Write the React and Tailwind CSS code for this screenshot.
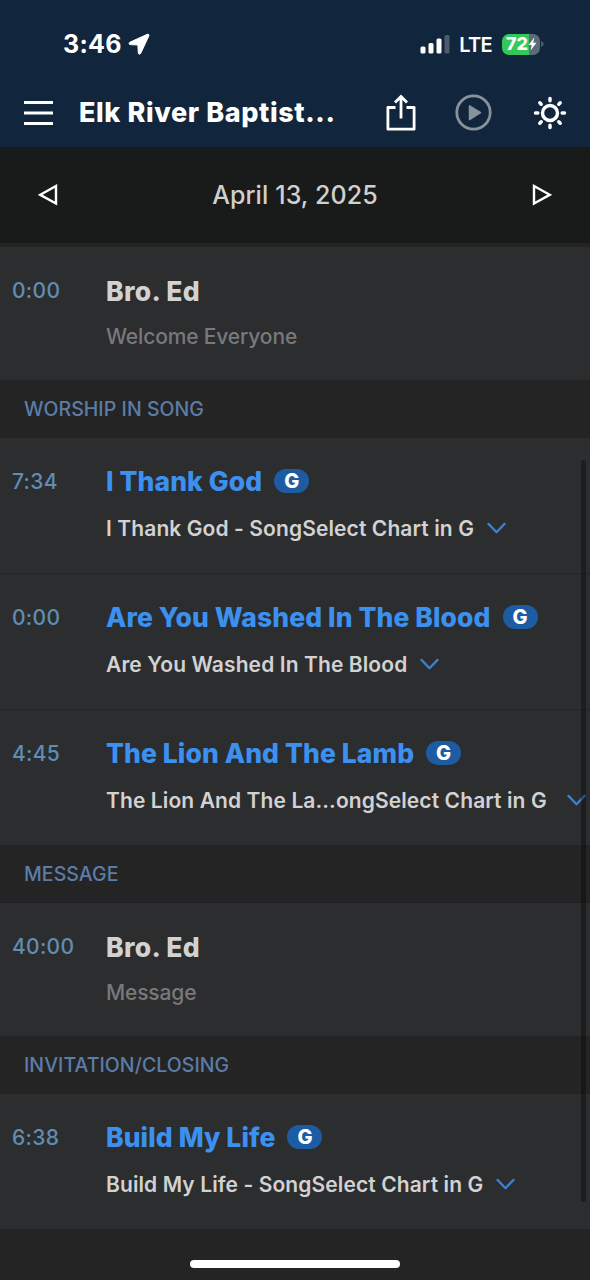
import { Fragment } from 'react';

const plan = [
    {
        section: null,
        items: [{ time: '0:00', title: 'Bro. Ed', note: 'Welcome Everyone' }],
    },
    {
        section: 'WORSHIP IN SONG',
        items: [
            { time: '7:34', title: 'I Thank God', songKey: 'G', chart: 'I Thank God - SongSelect Chart in G' },
            { time: '0:00', title: 'Are You Washed In The Blood', songKey: 'G', chart: 'Are You Washed In The Blood' },
            { time: '4:45', title: 'The Lion And The Lamb', songKey: 'G', chart: 'The Lion And The La...ongSelect Chart in G', wide: true },
        ],
    },
    {
        section: 'MESSAGE',
        items: [{ time: '40:00', title: 'Bro. Ed', note: 'Message' }],
    },
    {
        section: 'INVITATION/CLOSING',
        items: [{ time: '6:38', title: 'Build My Life', songKey: 'G', chart: 'Build My Life - SongSelect Chart in G' }],
    },
];

function StatusBar() {
    return (
        <div className="flex h-[88px] items-center pl-[63px] pr-[46px] text-white">
            <span className="pt-px text-[25px] font-bold leading-none tracking-[0.300px]">3:46</span>
            <svg className="ml-[6px] h-[22px] w-[22px]" viewBox="0 0 22 22" fill="#fff" stroke="#fff" strokeWidth="1" strokeLinejoin="round">
                <path d="M19.400 1.300 1.900 9.200c-1.200.6-1.100 2.200.3 2.400l7.700.4.4 7.900c.1 1.500 1.900 1.700 2.500.3L20.900 2.800c.4-1.100-.4-1.900-1.500-1.500z" />
            </svg>
            <div className="ml-auto flex items-center">
                <svg className="h-[20px] w-[30px]" viewBox="0 0 30 20" fill="#fff">
                    <rect x="0.500" y="12.500" width="5" height="7" rx="1.500" />
                    <rect x="8.500" y="9" width="5" height="10.500" rx="1.500" />
                    <rect x="16.500" y="4.500" width="5" height="15" rx="1.500" />
                    <rect x="24.500" y="1" width="5" height="18.500" rx="1.500" opacity="0.250" />
                </svg>
                <span className="ml-[9px] pt-px text-[20px] font-semibold leading-none tracking-[-0.700px]">LTE</span>
                <div className="ml-2.5 flex h-[21px] w-[38px] items-center overflow-hidden rounded-[7px] bg-linear-to-r from-[#34c759] from-72% to-[#5c6b7a] to-72% pl-1">
                    <span className="text-[18px] font-extrabold leading-none">72</span>
                    <svg className="h-[14px] w-[9px]" viewBox="0 0 9 14" fill="#fff">
                        <path d="M6.300.500.600 7.900h3.100L2.500 13.500l6-7.700H5.200z" />
                    </svg>
                </div>
                <svg className="ml-px h-[6px] w-[3px]" viewBox="0 0 3 6" fill="#4b5b6c">
                    <path d="M0 0c3.500 1 3.500 5 0 6z" />
                </svg>
            </div>
        </div>
    );
}

function NavBar() {
    return (
        <div className="flex h-[59px] items-start pl-6 pr-[23px]">
            <svg className="mt-[12px] h-[26px] w-[29px]" viewBox="0 0 29 26" stroke="#fff" strokeWidth="2.800">
                <path d="M0 2.500h29M0 13h29M0 23.500h29" />
            </svg>
            <h1 className="ml-[26px] mt-[9px] whitespace-nowrap text-[27px] font-extrabold leading-8 tracking-[0.600px] text-white">Elk River Baptist...</h1>
            <div className="ml-auto flex items-start">
                <svg className="mt-[6px] h-[38px] w-[30px]" viewBox="0 0 30 38" fill="none" stroke="#fff" strokeWidth="2.800">
                    <path d="M9.500 13.500H1.900v21.700h26.200V13.500h-7.600" strokeLinejoin="round" />
                    <path d="M15 24.500V3M9 8.500l6-6 6 6" />
                </svg>
                <svg className="ml-[39px] mt-[6px] h-[37px] w-[37px]" viewBox="0 0 37 37">
                    <circle cx="18.500" cy="18.500" r="16.700" fill="none" stroke="#88929d" strokeWidth="2.800" />
                    <path d="M14.500 11.800v13.800l11-6.900z" fill="#88929d" stroke="#88929d" strokeWidth="1.500" strokeLinejoin="round" />
                </svg>
                <svg className="ml-[41px] mt-[8px] h-[34px] w-[34px]" viewBox="0 0 34 34" fill="none" stroke="#fff" strokeLinecap="round">
                    <circle cx="17" cy="17" r="7.500" strokeWidth="3.400" />
                    <path strokeWidth="3.500" d="M17 2.500v2.300M17 29.200v2.300M2.500 17h2.300M29.200 17h2.300M6.800 6.800l1.400 1.400M25.800 25.800l1.400 1.400M6.800 27.200l1.400-1.400M25.800 8.200l1.400-1.400" />
                </svg>
            </div>
        </div>
    );
}

function DateBar() {
    return (
        <div className="flex h-24 items-center justify-between bg-[#191b1a] px-[38px]">
            <svg className="h-[22px] w-5" viewBox="0 0 20 22" fill="none" stroke="#fff" strokeWidth="2.400">
                <path d="M18 2v17.500L2.300 10.800z" />
            </svg>
            <span className="pt-px text-[25px] font-medium leading-none tracking-[0.100px] text-[#d0d0d0]">April 13, 2025</span>
            <svg className="h-[22px] w-5" viewBox="0 0 20 22" fill="none" stroke="#fff" strokeWidth="2.400">
                <path d="M2 2v17.500l15.700-8.700z" />
            </svg>
        </div>
    );
}

function PlanItem({ item }) {
    return (
        <div className={`flex border-b border-[#252526] bg-[#2c2d2f] pl-3 pt-[27px] last:border-b-0 ${item.note ? 'h-[133px]' : 'h-[136px] last:h-[135px]'}`}>
            <div className="w-[93px] shrink-0 pt-px text-[21px] font-medium leading-8 tracking-[0.300px] text-[#5f8db3]">{item.time}</div>
            <div className="min-w-0 whitespace-nowrap pl-px">
                <div className="flex h-8 items-center">
                    <span className={`text-[26.500px] font-extrabold leading-8 ${item.songKey ? 'tracking-[0.080px] text-[#3c91f0]' : 'pt-px tracking-[0.350px] text-[#d2d2d2]'}`}>{item.title}</span>
                    {item.songKey && (
                        <span className="ml-3 flex h-6 w-[35px] items-center justify-center rounded-full bg-[#1d5ba3] text-[20px] font-extrabold leading-none text-white">
                            {item.songKey}
                        </span>
                    )}
                </div>
                {item.note && <div className="mt-[17px] text-[21px] font-medium leading-7 tracking-[-0.150px] text-[#79797b]">{item.note}</div>}
                {item.chart && (
                    <div className="mt-[17px] flex h-7 items-center text-[21px] font-semibold tracking-[0.100px] text-[#d2d2d2]">
                        <span className="pt-px">{item.chart}</span>
                        <svg className={`h-3 w-[19px] shrink-0 ${item.wide ? 'ml-5' : 'ml-[13px]'}`} viewBox="0 0 19 12" fill="none" stroke="#3c82cf" strokeWidth="2.300" strokeLinecap="round" strokeLinejoin="round">
                            <path d="M1.500 1.900l8 8.300 8-8.300" />
                        </svg>
                    </div>
                )}
            </div>
        </div>
    );
}

export default function App() {
    return (
        <div className="relative h-[1280px] w-[590px] overflow-hidden bg-[#242424] font-['Inter',sans-serif]">
            <header className="bg-[#11263c]">
                <StatusBar />
                <NavBar />
            </header>
            <DateBar />
            <main className="pt-1">
                {plan.map((group, index) => (
                    <Fragment key={index}>
                        {group.section && (
                            <h2 className="h-[58px] border-b border-[#222226] pl-6 pt-px text-[19.500px] font-medium leading-[57px] tracking-[0.050px] text-[#5b7da8]">
                                {group.section}
                            </h2>
                        )}
                        <div>
                            {group.items.map((item) => (
                                <PlanItem key={item.title} item={item} />
                            ))}
                        </div>
                    </Fragment>
                ))}
            </main>

            {/* Scroll indicator */}
            <div className="absolute right-1 top-[460px] h-[742px] w-[5px] rounded-full bg-black/35" />

            {/* Home indicator */}
            <div className="absolute bottom-3 left-1/2 h-2 w-[210px] -translate-x-1/2 rounded-full bg-white" />
        </div>
    );
}
